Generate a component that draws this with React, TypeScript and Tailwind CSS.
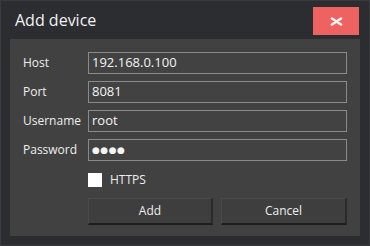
const fields = [
  { label: 'Host', value: '192.168.0.100' },
  { label: 'Port', value: '8081' },
  { label: 'Username', value: 'root' },
  { label: 'Password', value: '●●●●', secret: true },
];

const App = () => {
  return (
    <div
      className="w-[370px] h-[246px] bg-[#2b2d31] border border-[#383a3e] flex flex-col overflow-hidden"
      style={{ fontFamily: '"Open Sans", "DejaVu Sans", sans-serif' }}
    >
      {/* Title bar */}
      <div className="h-[38px] flex items-start justify-between pl-[14px] pr-[10px] pt-[6px]">
        <h1 className="text-[16px] leading-[26px] text-[#f2f2f2] font-normal">Add device</h1>
        <button className="w-[46px] h-[28px] bg-[#ef6262] flex items-center justify-center">
          <svg width="13" height="9" viewBox="0 0 13 9">
            <path d="M2 1.5 L11 7.5 M11 1.5 L2 7.5" stroke="#fff4f0" strokeWidth="2.6" strokeLinecap="round" />
          </svg>
        </button>
      </div>

      {/* Content */}
      <div className="mx-[9px] h-[197px] bg-[#414141] pt-[13px] pl-[13px] pr-[12px]">
        <div className="flex flex-col gap-[7px]">
          {fields.map((f) => (
            <div key={f.label} className="flex items-center">
              <span className="w-[65px] text-[12px] text-[#eeeeee]">{f.label}</span>
              <div className="w-[259px] h-[22px] border border-[#8a8a8a] bg-[#424242] flex items-center pl-[3px]">
                <span
                  className={
                    f.secret
                      ? 'text-[9px] tracking-[0.5px] text-[#f4f4f4]'
                      : 'text-[13px] text-[#f4f4f4]'
                  }
                >
                  {f.value}
                </span>
              </div>
            </div>
          ))}
        </div>

        <div className="ml-[65px] mt-[10px] flex items-center gap-[8px]">
          <div className="w-[14px] h-[14px] bg-white" />
          <span className="text-[12px] text-[#eeeeee]">HTTPS</span>
        </div>

        <div className="ml-[65px] mt-[9px] flex gap-[8px]">
          <button className="w-[125px] h-[27px] bg-[#3e3e3e] border-t border-l border-t-[#4a4a4a] border-l-[#4a4a4a] border-b-2 border-r-2 border-b-[#1e1e1e] border-r-[#2a2a2a] text-[12px] text-[#eeeeee]">
            Add
          </button>
          <button className="w-[126px] h-[27px] bg-[#3e3e3e] border-t border-l border-t-[#4a4a4a] border-l-[#4a4a4a] border-b-2 border-r-2 border-b-[#1e1e1e] border-r-[#2a2a2a] text-[12px] text-[#eeeeee]">
            Cancel
          </button>
        </div>
      </div>
    </div>
  );
};

export default App;
